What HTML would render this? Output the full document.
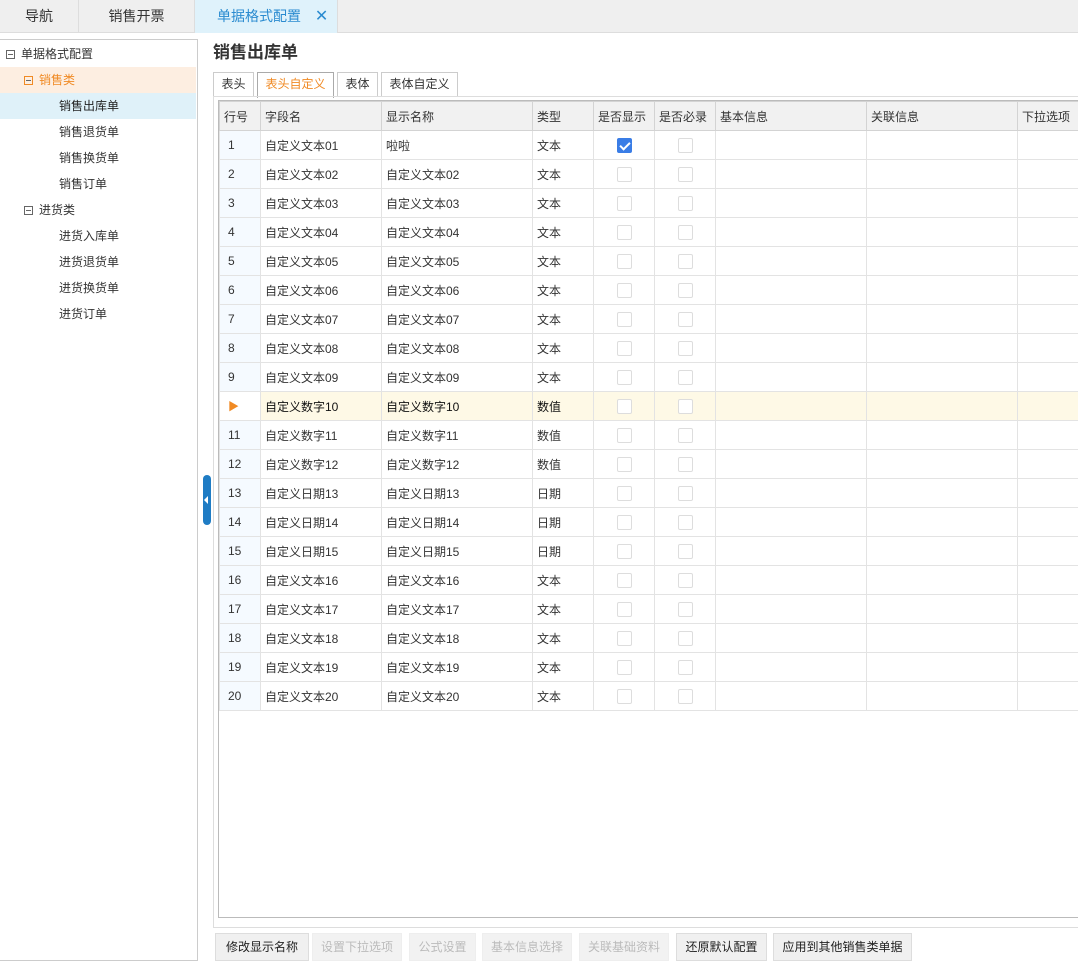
<!DOCTYPE html>
<html><head><meta charset="utf-8"><style>
*{margin:0;padding:0;box-sizing:border-box}
body{width:1078px;height:964px;background:#fff;font-family:"Liberation Sans","Noto Sans CJK SC",sans-serif;font-size:12px;color:#333;position:relative;overflow:hidden}
.abs{position:absolute}
.top{left:0;top:0;width:1078px;height:33px;background:#efefef;border-bottom:1px solid #ddd}
.tab{position:absolute;top:0;height:32px;line-height:32px;font-size:14px;color:#333;border-right:1px solid #ddd;text-align:center}
.tree{left:0;top:39px;width:198px;height:922px;border:1px solid #ccc;border-left:none}
.ti{position:absolute;left:0;width:196px;height:26px;line-height:26px;font-size:12px}
.box{display:inline-block;width:9px;height:9px;border:1px solid #666;position:relative;vertical-align:-1px;margin-right:6px}
.box:after{content:"";position:absolute;left:1px;top:3px;width:5px;height:1px;background:#666}
.t2{position:absolute;top:72px;height:25px;line-height:23px;border:1px solid #ccc;border-bottom:none;background:#fff;text-align:center;font-size:12px}
table{border-collapse:collapse;table-layout:fixed;position:absolute;left:219px;top:101px;width:878px}
td,th{height:29px;border:1px solid #e3e3e3;padding:0 4px;font-weight:normal;text-align:left;white-space:nowrap;overflow:hidden;font-size:12px}
th{background:#f1f1f1;border-color:#d3d3d3;height:29px}
td.n{background:#f5faff;padding-left:8px}
.cb{display:block;margin:0 auto;width:15px;height:15px;border:1px solid #ddd;border-radius:2px;background:#fff}
.ck{background:#3a7de6;border-color:#3a7de6;position:relative}
.ck:after{content:"";position:absolute;left:4px;top:1px;width:4px;height:8px;border:solid #fff;border-width:0 2px 2px 0;transform:rotate(45deg)}
tr.sel td{background:#fef9e6}
.btn{position:absolute;top:933px;height:28px;line-height:26px;border:1px solid #ddd;background:#f0f0f0;text-align:center;font-size:12px;color:#222}
.btn.d{color:#bbb;background:#f2f2f2;border-color:#eee}
</style></head><body>
<div class="abs top">
<div class="tab" style="left:0;width:79px">导航</div>
<div class="tab" style="left:79px;width:116px">销售开票</div>
<div class="tab" style="left:195px;width:143px;background:#dff2fb;color:#2a8bd0;text-align:left;padding-left:22px;height:33px">单据格式配置 <span style="margin-left:10px;font-size:16px">✕</span></div>
</div>
<div class="abs tree">
<div class="ti" style="top:1px;padding-left:6px"><span class="box"></span>单据格式配置</div>
<div class="ti" style="top:27px;padding-left:24px;background:#fdeee1;color:#f08a24"><span class="box" style="border-color:#f08a24"></span>销售类</div>
<div class="ti" style="top:53px;padding-left:59px;background:#dff1f9;color:#222">销售出库单</div>
<div class="ti" style="top:79px;padding-left:59px">销售退货单</div>
<div class="ti" style="top:105px;padding-left:59px">销售换货单</div>
<div class="ti" style="top:131px;padding-left:59px">销售订单</div>
<div class="ti" style="top:157px;padding-left:24px"><span class="box"></span>进货类</div>
<div class="ti" style="top:183px;padding-left:59px">进货入库单</div>
<div class="ti" style="top:209px;padding-left:59px">进货退货单</div>
<div class="ti" style="top:235px;padding-left:59px">进货换货单</div>
<div class="ti" style="top:261px;padding-left:59px">进货订单</div>
</div>
<div class="abs" style="left:203px;top:475px;width:8px;height:50px;background:#1f7cc4;border-radius:4px"></div>
<div class="abs" style="left:204px;top:496px;width:0;height:0;border-top:4px solid transparent;border-bottom:4px solid transparent;border-right:4px solid #fff"></div>
<div class="abs" style="left:213px;top:38px;font-size:17px;font-weight:bold;color:#333">销售出库单</div>
<div class="t2" style="left:213px;width:41px">表头</div>
<div class="t2" style="left:257px;width:77px;color:#f08a24;border-color:#aaa;height:26px">表头自定义</div>
<div class="t2" style="left:337px;width:41px">表体</div>
<div class="t2" style="left:381px;width:77px">表体自定义</div>
<div class="abs" style="left:213px;top:96px;width:866px;height:832px;border:1px solid #ddd;border-right:none"></div>
<div class="abs" style="left:218px;top:100px;width:861px;height:818px;border:1px solid #bbb;border-right:none"></div>
<table>
<colgroup><col style="width:41px"><col style="width:121px"><col style="width:151px"><col style="width:61px"><col style="width:61px"><col style="width:61px"><col style="width:151px"><col style="width:151px"><col style="width:80px"></colgroup>
<tr><th>行号</th><th>字段名</th><th>显示名称</th><th>类型</th><th>是否显示</th><th>是否必录</th><th>基本信息</th><th>关联信息</th><th>下拉选项</th></tr>
<tr><td class="n">1</td><td>自定义文本01</td><td>啦啦</td><td>文本</td><td><i class="cb ck"></i></td><td><i class="cb"></i></td><td></td><td></td><td></td></tr>
<tr><td class="n">2</td><td>自定义文本02</td><td>自定义文本02</td><td>文本</td><td><i class="cb"></i></td><td><i class="cb"></i></td><td></td><td></td><td></td></tr>
<tr><td class="n">3</td><td>自定义文本03</td><td>自定义文本03</td><td>文本</td><td><i class="cb"></i></td><td><i class="cb"></i></td><td></td><td></td><td></td></tr>
<tr><td class="n">4</td><td>自定义文本04</td><td>自定义文本04</td><td>文本</td><td><i class="cb"></i></td><td><i class="cb"></i></td><td></td><td></td><td></td></tr>
<tr><td class="n">5</td><td>自定义文本05</td><td>自定义文本05</td><td>文本</td><td><i class="cb"></i></td><td><i class="cb"></i></td><td></td><td></td><td></td></tr>
<tr><td class="n">6</td><td>自定义文本06</td><td>自定义文本06</td><td>文本</td><td><i class="cb"></i></td><td><i class="cb"></i></td><td></td><td></td><td></td></tr>
<tr><td class="n">7</td><td>自定义文本07</td><td>自定义文本07</td><td>文本</td><td><i class="cb"></i></td><td><i class="cb"></i></td><td></td><td></td><td></td></tr>
<tr><td class="n">8</td><td>自定义文本08</td><td>自定义文本08</td><td>文本</td><td><i class="cb"></i></td><td><i class="cb"></i></td><td></td><td></td><td></td></tr>
<tr><td class="n">9</td><td>自定义文本09</td><td>自定义文本09</td><td>文本</td><td><i class="cb"></i></td><td><i class="cb"></i></td><td></td><td></td><td></td></tr>
<tr class="sel"><td class="n" style="background:#fff;color:#f08a24;font-size:11px">▶</td><td style="color:#111">自定义数字10</td><td style="color:#111">自定义数字10</td><td style="color:#111">数值</td><td><i class="cb"></i></td><td><i class="cb"></i></td><td></td><td></td><td></td></tr>
<tr><td class="n">11</td><td>自定义数字11</td><td>自定义数字11</td><td>数值</td><td><i class="cb"></i></td><td><i class="cb"></i></td><td></td><td></td><td></td></tr>
<tr><td class="n">12</td><td>自定义数字12</td><td>自定义数字12</td><td>数值</td><td><i class="cb"></i></td><td><i class="cb"></i></td><td></td><td></td><td></td></tr>
<tr><td class="n">13</td><td>自定义日期13</td><td>自定义日期13</td><td>日期</td><td><i class="cb"></i></td><td><i class="cb"></i></td><td></td><td></td><td></td></tr>
<tr><td class="n">14</td><td>自定义日期14</td><td>自定义日期14</td><td>日期</td><td><i class="cb"></i></td><td><i class="cb"></i></td><td></td><td></td><td></td></tr>
<tr><td class="n">15</td><td>自定义日期15</td><td>自定义日期15</td><td>日期</td><td><i class="cb"></i></td><td><i class="cb"></i></td><td></td><td></td><td></td></tr>
<tr><td class="n">16</td><td>自定义文本16</td><td>自定义文本16</td><td>文本</td><td><i class="cb"></i></td><td><i class="cb"></i></td><td></td><td></td><td></td></tr>
<tr><td class="n">17</td><td>自定义文本17</td><td>自定义文本17</td><td>文本</td><td><i class="cb"></i></td><td><i class="cb"></i></td><td></td><td></td><td></td></tr>
<tr><td class="n">18</td><td>自定义文本18</td><td>自定义文本18</td><td>文本</td><td><i class="cb"></i></td><td><i class="cb"></i></td><td></td><td></td><td></td></tr>
<tr><td class="n">19</td><td>自定义文本19</td><td>自定义文本19</td><td>文本</td><td><i class="cb"></i></td><td><i class="cb"></i></td><td></td><td></td><td></td></tr>
<tr><td class="n">20</td><td>自定义文本20</td><td>自定义文本20</td><td>文本</td><td><i class="cb"></i></td><td><i class="cb"></i></td><td></td><td></td><td></td></tr>
</table>
<div class="btn" style="left:215px;width:94px">修改显示名称</div>
<div class="btn d" style="left:312px;width:90px">设置下拉选项</div>
<div class="btn d" style="left:409px;width:67px">公式设置</div>
<div class="btn d" style="left:482px;width:90px">基本信息选择</div>
<div class="btn d" style="left:579px;width:90px">关联基础资料</div>
<div class="btn" style="left:676px;width:91px">还原默认配置</div>
<div class="btn" style="left:773px;width:139px">应用到其他销售类单据</div>
</body></html>
